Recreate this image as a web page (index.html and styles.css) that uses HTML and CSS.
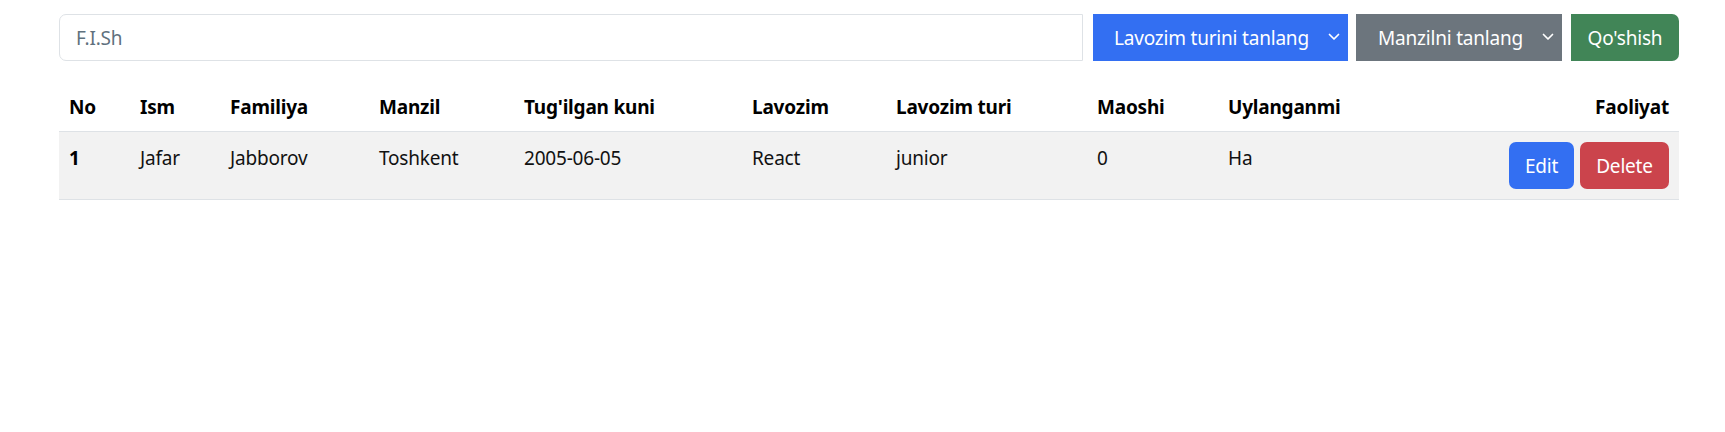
FILE: index.html
```html
<!DOCTYPE html>
<html lang="uz">
<head>
<meta charset="utf-8">
<title>Xodimlar</title>
<link rel="stylesheet" href="styles.css">
</head>
<body>
<div class="container">
  <div class="toolbar">
    <input class="search" type="text" placeholder="F.I.Sh">
    <div class="select select-blue">
      <span>Lavozim turini tanlang</span>
      <svg class="chev" width="12" height="8" viewBox="0 0 12 8"><path d="M1.5 1.5 L6 6 L10.5 1.5" fill="none" stroke="#fff" stroke-width="1.7" stroke-linecap="round" stroke-linejoin="round"/></svg>
    </div>
    <div class="select select-gray">
      <span>Manzilni tanlang</span>
      <svg class="chev" width="12" height="8" viewBox="0 0 12 8"><path d="M1.5 1.5 L6 6 L10.5 1.5" fill="none" stroke="#fff" stroke-width="1.7" stroke-linecap="round" stroke-linejoin="round"/></svg>
    </div>
    <button class="btn btn-add">Qo'shish</button>
  </div>

  <table class="table">
    <colgroup>
      <col class="c-no"><col class="c-ism"><col class="c-fam"><col class="c-manzil"><col class="c-tug">
      <col class="c-lav"><col class="c-lavt"><col class="c-mao"><col class="c-uyl"><col class="c-fao">
    </colgroup>
    <thead>
      <tr>
        <th>No</th><th>Ism</th><th>Familiya</th><th>Manzil</th><th>Tug'ilgan kuni</th>
        <th>Lavozim</th><th>Lavozim turi</th><th>Maoshi</th><th>Uylanganmi</th><th class="right">Faoliyat</th>
      </tr>
    </thead>
    <tbody>
      <tr class="striped">
        <th>1</th><td>Jafar</td><td>Jabborov</td><td>Toshkent</td><td>2005-06-05</td>
        <td>React</td><td>junior</td><td>0</td><td>Ha</td>
        <td class="right"><div class="actions"><button class="btn btn-edit">Edit</button><button class="btn btn-delete">Delete</button></div></td>
      </tr>
    </tbody>
  </table>
</div>
</body>
</html>
```

FILE: styles.css
```css
* { box-sizing: border-box; }

html, body {
  margin: 0;
  padding: 0;
  background: #ffffff;
}

body {
  font-family: "Noto Sans", "Open Sans", Arial, sans-serif;
  font-size: 19px;
  letter-spacing: -0.2px;
  line-height: 30px;
  color: #212529;
}

.container {
  margin-left: 59px;
  width: 1620px;
  padding-top: 14px;
}

.toolbar {
  display: flex;
  align-items: stretch;
  height: 47px;
}

.search {
  flex: 1 1 auto;
  min-width: 0;
  height: 47px;
  margin: 0 10px 0 0;
  padding: 0 16px;
  border: 1px solid #dee2e6;
  border-radius: 7px 0 0 7px;
  font-family: inherit;
  font-size: 19px;
  letter-spacing: -0.2px;
  color: #212529;
  outline: none;
}

.search::placeholder {
  color: #5f717e;
}

.select {
  display: flex;
  align-items: center;
  justify-content: space-between;
  height: 47px;
  color: #ffffff;
  white-space: nowrap;
}

.select span {
  margin-top: 1px;
}

.select-blue {
  width: 255px;
  margin-right: 8px;
  padding: 0 8px 0 21px;
  background: #336ff2;
}

.select-gray {
  width: 206px;
  margin-right: 9px;
  padding: 0 8px 0 22px;
  background: #6c757d;
}

.chev {
  flex: none;
  margin-top: -2px;
}

.btn {
  font-family: inherit;
  font-size: 19px;
  letter-spacing: -0.2px;
  line-height: 30px;
  color: #ffffff;
  border: none;
  cursor: pointer;
}

.btn-add {
  width: 108px;
  height: 47px;
  padding: 0;
  background: #418557;
  border-radius: 0 7px 7px 0;
}

.table {
  width: 1620px;
  margin-top: 20px;
  border-collapse: collapse;
  table-layout: fixed;
}

.c-no { width: 71px; }
.c-ism { width: 90px; }
.c-fam { width: 149px; }
.c-manzil { width: 145px; }
.c-tug { width: 228px; }
.c-lav { width: 144px; }
.c-lavt { width: 201px; }
.c-mao { width: 131px; }
.c-uyl { width: 130px; }
.c-fao { width: 331px; }

.table th,
.table td {
  padding: 11px 10px 9px;
  text-align: left;
  vertical-align: top;
  border-bottom: 1px solid #dee2e6;
  white-space: nowrap;
}

.table thead th {
  font-weight: 700;
  color: #000000;
}

.table tbody th {
  font-weight: 700;
  color: #000000;
}

.table tbody td {
  color: #111111;
}

.striped th,
.striped td {
  background: #f2f2f2;
}

.table .right {
  text-align: right;
}

.table td.right {
  padding-top: 10px;
  padding-bottom: 10px;
}

.actions {
  display: flex;
  justify-content: flex-end;
  gap: 6px;
}

.btn-edit,
.btn-delete {
  height: 47px;
  border-radius: 7px;
}

.btn-edit {
  width: 65px;
  padding: 0;
  background: #336ff2;
}

.btn-delete {
  width: 89px;
  padding: 0;
  background: #cb444c;
}
```
